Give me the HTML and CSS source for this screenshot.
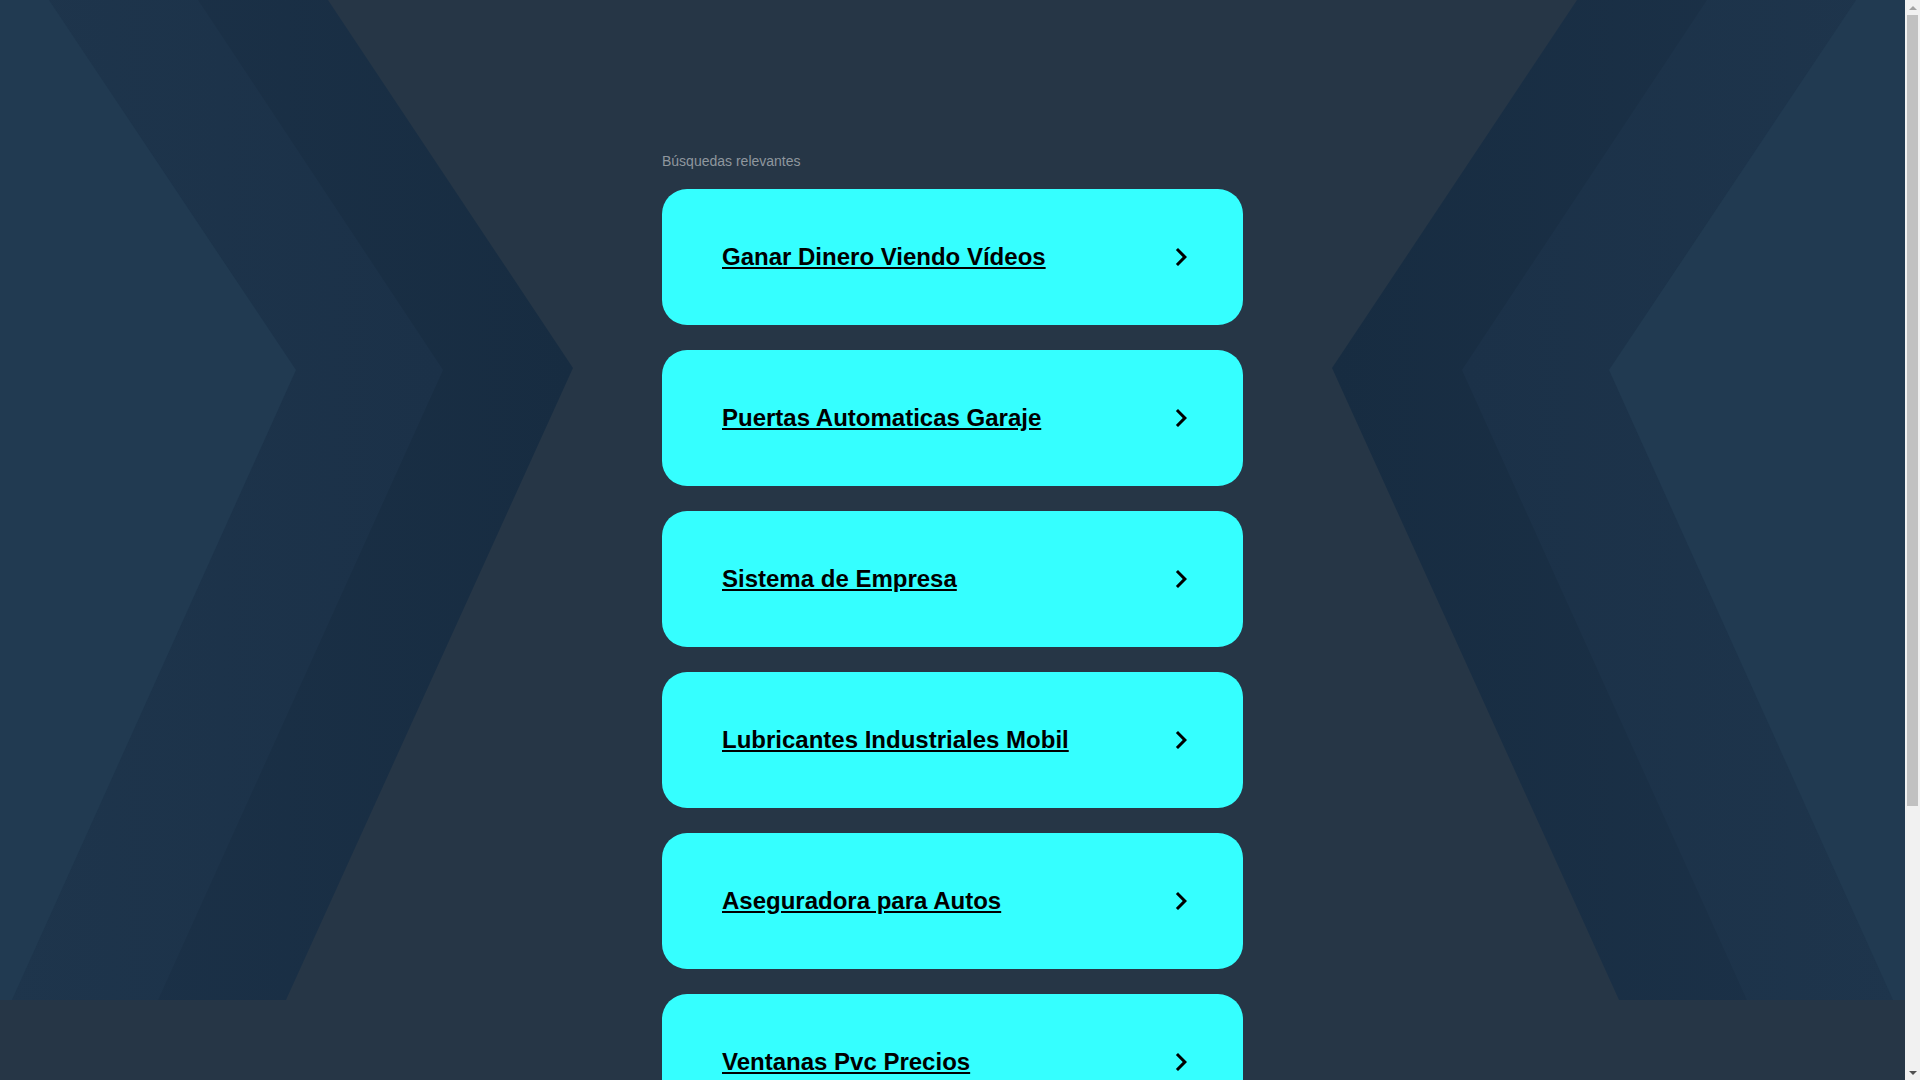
FILE: index.html
```html
<!DOCTYPE html>
<html lang="es">
<head>
<meta charset="utf-8">
<title>Búsquedas relevantes</title>
<link rel="stylesheet" href="styles.css">
</head>
<body>
<div class="page">
  <div class="backdrop" aria-hidden="true">
    <svg class="backdrop-art" viewBox="0 0 1905 1000" preserveAspectRatio="none">
      <defs>
        <linearGradient id="gOuterL" x1="0" y1="0" x2="1" y2="0">
          <stop offset="0" stop-color="#1c3249"/>
          <stop offset="1" stop-color="#172c41"/>
        </linearGradient>
        <linearGradient id="gMidL" x1="0" y1="0" x2="1" y2="0">
          <stop offset="0" stop-color="#1e354c"/>
          <stop offset="1" stop-color="#1b3148"/>
        </linearGradient>
        <linearGradient id="gOuterR" x1="1" y1="0" x2="0" y2="0">
          <stop offset="0" stop-color="#1c3249"/>
          <stop offset="1" stop-color="#172c41"/>
        </linearGradient>
        <linearGradient id="gMidR" x1="1" y1="0" x2="0" y2="0">
          <stop offset="0" stop-color="#1e354c"/>
          <stop offset="1" stop-color="#1b3148"/>
        </linearGradient>
      </defs>
      <polygon points="0,0 328,0 573,368 286,1000 0,1000" fill="url(#gOuterL)"/>
      <polygon points="0,0 198,0 443,370 158,1000 0,1000" fill="url(#gMidL)"/>
      <polygon points="0,0 49,0 296,370 12,1000 0,1000" fill="#213a51"/>
      <polygon points="1905,0 1577,0 1332,368 1619,1000 1905,1000" fill="url(#gOuterR)"/>
      <polygon points="1905,0 1707,0 1462,370 1747,1000 1905,1000" fill="url(#gMidR)"/>
      <polygon points="1905,0 1856,0 1609,370 1893,1000 1905,1000" fill="#213a51"/>
    </svg>
  </div>
  <main class="content">
    <p class="heading">Búsquedas relevantes</p>
    <ul class="links">
      <li><a class="card" href="#"><span class="label">Ganar Dinero Viendo Vídeos</span><svg class="chev" viewBox="0 0 24 24"><path d="M10 6L8.59 7.41 13.17 12l-4.58 4.59L10 18l6-6z"/></svg></a></li>
      <li><a class="card" href="#"><span class="label">Puertas Automaticas Garaje</span><svg class="chev" viewBox="0 0 24 24"><path d="M10 6L8.59 7.41 13.17 12l-4.58 4.59L10 18l6-6z"/></svg></a></li>
      <li><a class="card" href="#"><span class="label">Sistema de Empresa</span><svg class="chev" viewBox="0 0 24 24"><path d="M10 6L8.59 7.41 13.17 12l-4.58 4.59L10 18l6-6z"/></svg></a></li>
      <li><a class="card" href="#"><span class="label">Lubricantes Industriales Mobil</span><svg class="chev" viewBox="0 0 24 24"><path d="M10 6L8.59 7.41 13.17 12l-4.58 4.59L10 18l6-6z"/></svg></a></li>
      <li><a class="card" href="#"><span class="label">Aseguradora para Autos</span><svg class="chev" viewBox="0 0 24 24"><path d="M10 6L8.59 7.41 13.17 12l-4.58 4.59L10 18l6-6z"/></svg></a></li>
      <li><a class="card" href="#"><span class="label">Ventanas Pvc Precios</span><svg class="chev" viewBox="0 0 24 24"><path d="M10 6L8.59 7.41 13.17 12l-4.58 4.59L10 18l6-6z"/></svg></a></li>
    </ul>
  </main>
</div>
<div class="scrollbar" aria-hidden="true">
  <span class="sb-btn"><span class="sb-arrow sb-arrow-up"></span></span>
  <span class="sb-track"><span class="sb-thumb"></span></span>
  <span class="sb-btn"><span class="sb-arrow sb-arrow-down"></span></span>
</div>
</body>
</html>
```
FILE: styles.css
```css
html {
  background: #263646;
}

body {
  margin: 0;
  font-family: "Liberation Sans", Arial, sans-serif;
  color: #000;
}

.page {
  position: relative;
  margin-right: 15px;
  min-height: 1434px;
}

.backdrop {
  position: absolute;
  top: 0;
  left: 0;
  width: 100%;
  height: 1000px;
  z-index: 0;
}

.backdrop-art {
  display: block;
  width: 100%;
  height: 100%;
}

.content {
  position: relative;
  z-index: 1;
  width: 581px;
  margin: 0 auto;
  padding: 153px 0 304px;
}

.heading {
  margin: 0 0 20px;
  font-size: 14px;
  line-height: 16px;
  color: #8f979e;
}

.links {
  list-style: none;
  margin: 0;
  padding: 0;
  display: flex;
  flex-direction: column;
  gap: 25px;
}

.card {
  display: flex;
  align-items: center;
  justify-content: space-between;
  height: 136px;
  box-sizing: border-box;
  padding: 0 44px 0 60px;
  background: #35ffff;
  border-radius: 25px;
  color: #000;
  text-decoration: none;
}

.label {
  font-size: 24px;
  font-weight: 700;
  text-decoration: underline;
  text-underline-offset: 2px;
}

.chev {
  width: 36px;
  height: 36px;
  flex: none;
  fill: #000;
}

/* classic browser scrollbar drawn over the right edge */
.scrollbar {
  position: fixed;
  top: 0;
  right: 0;
  width: 15px;
  height: 100vh;
  background: #f1f1f1;
  display: flex;
  flex-direction: column;
  z-index: 5;
}

.sb-btn {
  flex: none;
  height: 15px;
  display: flex;
  align-items: center;
  justify-content: center;
}

.sb-arrow {
  width: 0;
  height: 0;
  border-left: 4px solid transparent;
  border-right: 4px solid transparent;
}

.sb-arrow-up {
  border-bottom: 4px solid #a3a3a3;
}

.sb-arrow-down {
  border-top: 4px solid #505050;
}

.sb-track {
  flex: 1;
  display: flex;
  flex-direction: column;
  padding: 0 2px;
}

.sb-thumb {
  height: 791px;
  background: #c1c1c1;
}
```
